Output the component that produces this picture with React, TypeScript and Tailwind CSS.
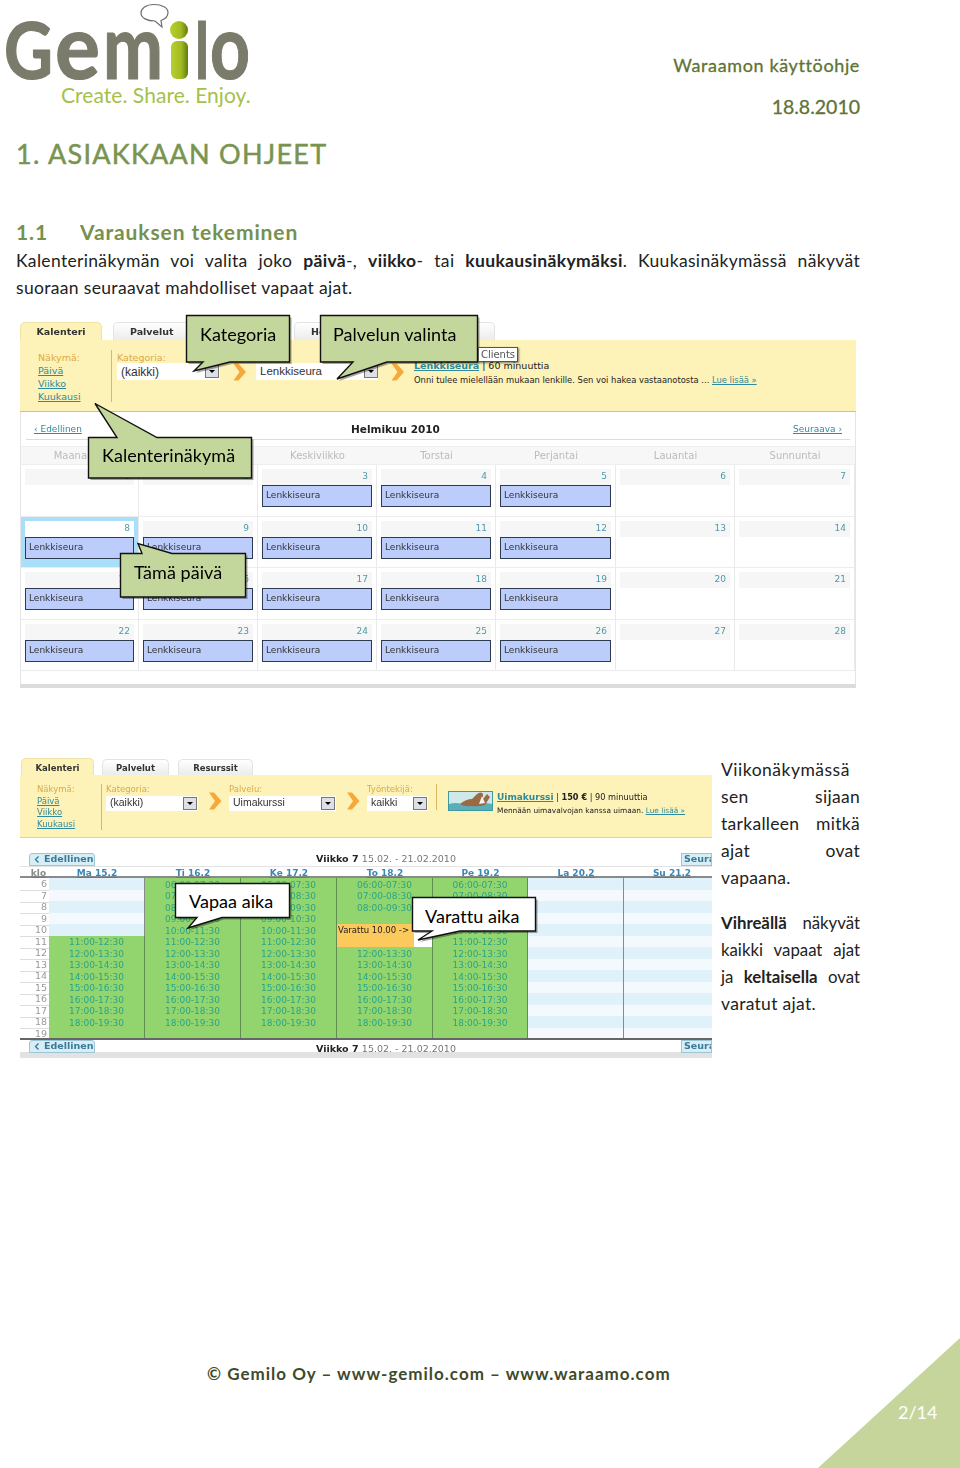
import React from "react";

const FONT_BODY = "font-['Lato','Noto_Sans',sans-serif]";
const FONT_UI = "font-['DejaVu_Sans',sans-serif]";

function Callout({
  className,
  w,
  h,
  d,
  fill,
  textClass,
  text,
}: {
  className: string;
  w: number;
  h: number;
  d: string;
  fill: string;
  textClass: string;
  text: string;
}) {
  return (
    <div className={`absolute ${className}`}>
      <svg width={w} height={h} className="block overflow-visible">
        <path d={d} transform="translate(2 2)" fill="#000" opacity="0.35" />
        <path d={d} fill={fill} stroke="#111" strokeWidth="1.4" />
      </svg>
      <span className={`absolute whitespace-nowrap text-[18px] leading-[24px] tracking-[0.05px] text-black ${FONT_BODY} ${textClass}`}>{text}</span>
    </div>
  );
}

function Chevron({ className }: { className: string }) {
  return (
    <svg viewBox="0 0 14 18" className={`shrink-0 ${className}`}>
      <path d="M1 0.5 L6 0.5 L13.500 9 L6 17.500 L1 17.500 L7 9 Z" fill="#f5a93a" />
    </svg>
  );
}

function Select({ className, text, textClass }: { className: string; text: string; textClass: string }) {
  return (
    <div className={`flex items-center justify-between bg-white font-['Liberation_Sans',sans-serif] text-[#333] ${className} ${textClass}`}>
      <span className="pl-[4px] whitespace-nowrap">{text}</span>
      <span className="flex h-[13px] w-[14px] items-center justify-center border border-[#777] bg-[#dfdfe6]">
        <span className="h-0 w-0 border-x-[3px] border-t-[3px] border-x-transparent border-t-black" />
      </span>
    </div>
  );
}

function ViewLinks({ small }: { small?: boolean }) {
  const cls = small ? "text-[8.5px] leading-[11.6px]" : "text-[9.5px] leading-[13px]";
  return (
    <div className={`flex flex-col ${FONT_UI} ${cls}`}>
      <span className="text-[#dca94a]">Näkymä:</span>
      <span className="text-[#2f8a9c] underline">Päivä</span>
      <span className="text-[#2f8a9c] underline">Viikko</span>
      <span className="text-[#2f8a9c] underline">Kuukausi</span>
    </div>
  );
}

function Tab({ className, label, active }: { className: string; label: string; active?: boolean }) {
  return (
    <div
      className={`flex items-center rounded-t-[5px] border border-b-0 pt-[2px] ${FONT_UI} font-bold text-[#333] ${
        active ? "border-[#efe3a8] bg-[#fdf2b7]" : "border-[#e3e3e3] bg-gradient-to-b from-white to-[#ececec]"
      } ${className}`}
    >
      {label}
    </div>
  );
}

const monthDays = [
  [1, 2, 3, 4, 5, 6, 7],
  [8, 9, 10, 11, 12, 13, 14],
  [15, 16, 17, 18, 19, 20, 21],
  [22, 23, 24, 25, 26, 27, 28],
];
const weekdays = ["Maanantai", "Tiistai", "Keskiviikko", "Torstai", "Perjantai", "Lauantai", "Sunnuntai"];
const monthCols = "grid-cols-[118px_119px_119px_119px_120px_119px_120px]";

function MonthView() {
  return (
    <div className={`ml-[20px] mt-[21px] w-[836px] blur-[0.4px] ${FONT_UI}`}>
      <div className="flex h-[18px] items-end">
        <Tab active className="h-[18px] w-[82px] justify-center text-[9.5px]" label="Kalenteri" />
        <Tab className="ml-[11px] h-[18px] w-[150px] pl-[16px] text-[9.5px]" label="Palvelut" />
        <Tab className="ml-[31px] h-[18px] w-[201px] pl-[16px] text-[9.5px]" label="Henkilöstö" />
      </div>
      <div className="relative flex h-[72px] border-b border-[#d9c469] bg-[#fdf2b7] pt-[11px]">
        <div className="ml-[18px] -mt-[1px] h-[52px] w-[74px] self-start border-r border-[#dcb75b] pt-[1px]">
          <ViewLinks />
        </div>
        <div className="ml-[5px] w-[104px]">
          <div className="text-[9.5px] leading-[13px] text-[#dca94a]">Kategoria:</div>
          <Select className="-mt-[1px] h-[17px] w-[103px] pr-[1px]" text="(kaikki)" textClass="text-[12px]" />
        </div>
        <Chevron className="ml-[11px] mt-[12px] h-[18px] w-[15px]" />
        <div className="ml-[9px] w-[123px] pt-[12px]">
          <Select className="h-[17px] w-[122px]" text="Lenkkiseura" textClass="text-[11.5px]" />
        </div>
        <Chevron className="ml-[11px] mt-[12px] h-[18px] w-[15px]" />
        <div className="ml-[9px] pt-[8px] text-[8.4px] leading-[14px] text-[#222]">
          <div className="text-[9.5px]">
            <span className="font-bold text-[#2f8a9c] underline">Lenkkiseura</span> | 60 minuuttia
          </div>
          <div className="whitespace-nowrap">
            Onni tulee mielellään mukaan lenkille. Sen voi hakea vastaanotosta ... <span className="text-[#2f8a9c] underline">Lue lisää »</span>
          </div>
        </div>
      </div>
      <div className="border-x border-[#e5e5e5]">
        <div className="mx-[5px] flex h-[28px] items-center border-b border-[#ddd] pl-[8px] pr-[8px] pt-[8px] text-[9px]">
          <span className="w-[317px] text-[#2f8a9c] underline">‹ Edellinen</span>
          <span className="text-[10.500px] font-bold text-[#222]">Helmikuu 2010</span>
          <span className="ml-auto text-[#2f8a9c] underline">Seuraava ›</span>
        </div>
        <div className={`mt-[6px] grid h-[19px] ${monthCols} items-center border-y border-[#eee] bg-[#f7f7f7] text-center text-[10px] text-[#bbb]`}>
          {weekdays.map((d) => (
            <span key={d}>{d}</span>
          ))}
        </div>
        {monthDays.map((row, r) => (
          <div key={r} className={`grid h-[51.5px] ${monthCols} border-b border-[#ececec]`}>
            {row.map((n, c) => {
              const today = n === 8;
              const hasEvent = c < 5 && n > 2;
              return (
                <div key={n} className={`border-r border-[#e9e9e9] pl-[4px] pr-[4px] pt-[4px] ${today ? "bg-[#a9dff8]" : ""}`}>
                  <div className={`h-[16px] pr-[4px] pt-[2px] text-right text-[9px] leading-[11px] text-[#4f9aa8] ${today ? "bg-white" : "bg-[#f6f6f6]"}`}>
                    {n}
                  </div>
                  {hasEvent && (
                    <div className="flex h-[22px] items-center border border-[#2e3a50] bg-[#bccdfb] pl-[3px] text-[9px] text-[#333]">
                      Lenkkiseura
                    </div>
                  )}
                </div>
              );
            })}
          </div>
        ))}
        <div className="h-[13px] bg-white" />
      </div>
      <div className="h-[4px] bg-[#dcdcdc]" />
    </div>
  );
}

const weekCols = "grid-cols-[29px_96px_96px_96px_96px_95px_96px_96px]";
const hours = [6, 7, 8, 9, 10, 11, 12, 13, 14, 15, 16, 17, 18, 19];
const two = (n: number) => String(n).padStart(2, "0");
const slot = (h: number) => `${two(h)}:00-${two(h + 1)}:30`;

function Green({ text }: { text?: string }) {
  return (
    <div className="flex items-center justify-center border-b border-r border-b-[#6faa58] border-r-[#5f8f50] bg-[#92d56f] pt-[2px] text-[9px] leading-none text-[#2ba483]">
      {text}
    </div>
  );
}

function Empty({ i }: { i: number }) {
  return <div className={`border-b border-r border-b-[#b7d2dc] border-r-[#8a8a8a] ${i % 2 === 0 ? "bg-[#dff1f9]" : "bg-[#f3f9fd]"}`} />;
}

function NavButton({ label, left }: { label: string; left?: boolean }) {
  return (
    <span className={`flex h-[13px] items-center border border-[#9cc6d6] bg-[#d7eef6] text-[9.5px] font-bold text-[#3b7a97] ${left ? "w-[66px] rounded-t-[3px] pl-[4px]" : "w-[31px] overflow-hidden pl-[2px]"}`}>
      {left && (
        <svg viewBox="0 0 8 10" className="mr-[4px] h-[9px] w-[6px] shrink-0">
          <path d="M6 1 L2 5 L6 9" fill="none" stroke="#3b7a97" strokeWidth="1.8" />
        </svg>
      )}
      {label}
    </span>
  );
}

function WeekNav() {
  return (
    <>
      <NavButton left label="Edellinen" />
      <span className="ml-[221px] mt-[2px] whitespace-nowrap text-[9.5px] font-bold text-[#222]">
        Viikko 7 <span className="text-[9.500px] font-normal text-[#777]">15.02. - 21.02.2010</span>
      </span>
      <span className="ml-auto">
        <NavButton label="Seura" />
      </span>
    </>
  );
}

function WeekView() {
  const days = ["Ma 15.2", "Ti 16.2", "Ke 17.2", "To 18.2", "Pe 19.2", "La 20.2", "Su 21.2"];
  return (
    <div className={`ml-[20px] mt-[3px] w-[692px] shrink-0 overflow-hidden blur-[0.4px] ${FONT_UI}`}>
      <div className="flex h-[17px] items-end">
        <Tab active className="ml-[1px] h-[17px] w-[73px] justify-center text-[8.5px]" label="Kalenteri" />
        <Tab className="ml-[8px] h-[16px] w-[67px] justify-center text-[8.5px]" label="Palvelut" />
        <Tab className="ml-[9px] h-[16px] w-[75px] justify-center text-[8.5px]" label="Resurssit" />
      </div>
      <div className="flex h-[63px] border-b border-[#e3d68f] bg-[#fdf3b8] pt-[9px] text-[8.5px] leading-[11.6px]">
        <div className="ml-[17px] h-[46px] w-[65px] border-r border-[#dcb75b]">
          <ViewLinks small />
        </div>
        <div className="ml-[4px] w-[92px]">
          <div className="text-[#dca94a]">Kategoria:</div>
          <Select className="h-[15px] w-[92px] pr-[1px]" text="(kaikki)" textClass="text-[10.5px]" />
        </div>
        <Chevron className="ml-[10px] mt-[8px] h-[18px] w-[14px]" />
        <div className="ml-[7px] w-[107px]">
          <div className="text-[#dca94a]">Palvelu:</div>
          <Select className="h-[15px] w-[107px] pr-[1px]" text="Uimakurssi" textClass="text-[10.5px]" />
        </div>
        <Chevron className="ml-[10px] mt-[8px] h-[18px] w-[14px]" />
        <div className="ml-[7px] w-[61px]">
          <div className="text-[#dca94a]">Työntekijä:</div>
          <Select className="h-[15px] w-[61px] pr-[1px]" text="kaikki" textClass="text-[10.5px]" />
        </div>
        <div className="ml-[8px] h-[26px] border-r border-[#dcb75b]" />
        <svg viewBox="0 0 45 20" className="ml-[11px] mt-[7px] h-[20px] w-[45px] shrink-0">
          <rect x="0.5" y="0.5" width="44" height="19" fill="#cfe9ea" stroke="#3f9a9c" />
          <path d="M1 13 Q8 11 14 13 T28 13 T44 13 V19 H1 Z" fill="#58aebb" />
          <path d="M12 13 Q18 8 24 8 L29 3 Q33 0 35 3 L35 8 L39 3 L42 6 L37 14 Q30 16 24 15 Q16 16 12 13 Z" fill="#9a6a44" />
          <path d="M31 13 L34 5 L37 12 Z" fill="#f4f4f0" />
        </svg>
        <div className="ml-[4px] pt-[7px] text-[8px] leading-[13px] text-[#222]">
          <div className="whitespace-nowrap text-[8.2px]">
            <span className="text-[9px] font-bold text-[#2f8a9c] underline">Uimakurssi</span> | <span className="font-bold">150 €</span> | 90 minuuttia
          </div>
          <div className="whitespace-nowrap text-[7.4px]">
            Mennään uimavalvojan kanssa uimaan. <span className="text-[#2f8a9c] underline">Lue lisää »</span>
          </div>
        </div>
      </div>
      <div className="mt-[13px] flex h-[15px] items-end pl-[9px]">
        <WeekNav />
      </div>
      <div className={`grid h-[12px] ${weekCols} border-b-2 border-t border-b-[#8a8a8a] border-t-[#e3e3e3] pt-[1px] text-center text-[9px] font-bold leading-[10px] text-[#3b86b8] underline`}>
        <span className="pl-[8px] text-[#8a8a8a]">klo</span>
        {days.map((d) => (
          <span key={d}>{d}</span>
        ))}
      </div>
      <div className="h-[162px] overflow-hidden border-b-2 border-[#666]">
        {hours.map((h) => (
          <div key={h} className={`grid h-[11.5px] ${weekCols}`}>
            <div className="border-b border-[#ddd] pr-[2px] text-right text-[9.5px] leading-[12px] text-[#999]">{h}</div>
            {h < 11 ? <Empty i={h - 6} /> : <Green text={h < 19 ? slot(h) : undefined} />}
            <Green text={h < 19 ? slot(h) : undefined} />
            <Green text={h < 19 ? slot(h) : undefined} />
            {h === 10 || h === 11 ? (
              <div className="flex border-r border-[#5f8f50] bg-white">
                <div className="w-[77px] overflow-hidden whitespace-nowrap bg-[#fcc95d] pl-[1px] text-[8.5px] leading-[12px] text-[#222]">
                  {h === 10 ? "Varattu 10.00 ->" : ""}
                </div>
              </div>
            ) : (
              <Green text={h < 19 && h !== 9 ? slot(h) : undefined} />
            )}
            <Green text={h < 19 ? slot(h) : undefined} />
            <Empty i={h - 6} />
            <Empty i={h - 6} />
          </div>
        ))}
      </div>
      <div className="flex h-[12px] items-start bg-white pl-[9px]">
        <WeekNav />
      </div>
      <div className="h-[6px] bg-[#e2e2e2]" />
    </div>
  );
}

function Logo() {
  return (
    <div className="relative h-[112px] w-[260px]">
      <svg width="260" height="112" viewBox="0 0 260 112" className="block">
        <g fill="#7b7b6b" stroke="#7b7b6b" strokeWidth="1.2" strokeLinejoin="round" fontFamily="'Lato', sans-serif" fontWeight="700">
          <text x="4" y="79" fontSize="79" textLength="49" lengthAdjust="spacingAndGlyphs">G</text>
          <text x="55" y="79" fontSize="90" textLength="45" lengthAdjust="spacingAndGlyphs">e</text>
          <text x="103" y="79" fontSize="90" textLength="60" lengthAdjust="spacingAndGlyphs">m</text>
          <text x="195" y="79" fontSize="78" textLength="14" lengthAdjust="spacingAndGlyphs">l</text>
          <text x="210" y="79" fontSize="90" textLength="40" lengthAdjust="spacingAndGlyphs">o</text>
        </g>
        <defs>
          <linearGradient id="gi" x1="0" x2="1" y1="0" y2="0">
            <stop offset="0" stopColor="#b9cf2f" />
            <stop offset="0.6" stopColor="#a2bb22" />
            <stop offset="1" stopColor="#5f7a12" />
          </linearGradient>
        </defs>
        <circle cx="179" cy="30" r="9" fill="url(#gi)" />
        <rect x="171" y="41" width="17" height="38" rx="6" fill="url(#gi)" />
        <path
          d="M154 4.5 C146 4.5 141 8.500 141 13 C141 18 147 21 155 21 L162 27 L161 20.500 C165 19 168 16 168 12.500 C168 8 162 4.5 154 4.5 Z"
          fill="#fff"
          stroke="#6d6d6d"
          strokeWidth="1.2"
        />
      </svg>
      <span className={`absolute left-[61px] top-[83px] whitespace-nowrap text-[21px] leading-[24px] tracking-[0.05px] text-[#a5c14a] ${FONT_BODY}`}>
        Create. Share. Enjoy.
      </span>
    </div>
  );
}

export default function App() {
  const jline = "whitespace-nowrap [text-align:justify] [text-align-last:justify]";
  return (
    <div className={`relative h-[1468px] w-[960px] overflow-hidden bg-white ${FONT_BODY} text-[#222]`}>
      <header className="flex h-[134px] items-start justify-between pr-[100px]">
        <Logo />
        <div className="pt-[53px] text-right leading-[24px] text-[#5f7334] [-webkit-text-stroke:0.3px_#5f7334]">
          <div className="text-[18px] tracking-[0.63px]">Waraamon käyttöohje</div>
          <div className="mt-[18px] text-[19.500px]">18.8.2010</div>
        </div>
      </header>

      <h1 className="flex h-[40px] items-center pl-[16px] text-[27px] tracking-[1.25px] text-[#7a9450] [-webkit-text-stroke:0.5px_#7a9450]">
        <span className="w-[32px]">1.</span>
        <span>ASIAKKAAN OHJEET</span>
      </h1>

      <h2 className="mt-[44px] flex h-[28px] items-center pl-[16px] text-[21px] font-bold leading-[28px] tracking-[0.9px] text-[#76904d]">
        <span className="w-[64px]">1.1</span>
        <span>Varauksen tekeminen</span>
      </h2>

      <div className="ml-[16px] mt-[1px] w-[844px] text-[17.500px] leading-[27px] tracking-[0.33px]">
        <p className={jline}>
          Kalenterinäkymän voi valita joko <b>päivä</b>-, <b>viikko</b>- tai <b>kuukausinäkymäksi</b>. Kuukasinäkymässä näkyvät
        </p>
        <p>suoraan seuraavat mahdolliset vapaat ajat.</p>
      </div>

      <MonthView />

      <div className="mt-[67px] flex items-start">
        <WeekView />
        <div className="ml-[9px] mt-[1px] w-[139px] text-[17.500px] leading-[27px] tracking-[0.3px]">
          <p className="whitespace-nowrap tracking-[0.5px]">Viikonäkymässä</p>
          <p className={jline}>sen sijaan</p>
          <p className={jline}>tarkalleen mitkä</p>
          <p className={jline}>ajat ovat</p>
          <p>vapaana.</p>
          <p className={`mt-[18px] text-[16.800px] tracking-[0px] ${jline}`}>
            <b>Vihreällä</b> näkyvät
          </p>
          <p className={`text-[16.800px] tracking-[0px] ${jline}`}>kaikki vapaat ajat</p>
          <p className={`text-[16.800px] tracking-[0px] ${jline}`}>
            ja <b>keltaisella</b> ovat
          </p>
          <p>varatut ajat.</p>
        </div>
      </div>

      <footer className="mt-[302px] h-[28px] pl-[207px] text-[17px] font-bold leading-[28px] tracking-[1px] text-[#3f4a28]">
        © Gemilo Oy – www-gemilo.com – www.waraamo.com
      </footer>

      <div className="absolute bottom-0 right-0 h-[130px] w-[142px] bg-[#c5d59b] [clip-path:polygon(100%_0,100%_100%,0_100%)]">
        <span className="absolute left-[80px] top-[62px] text-[18px] leading-[24px] text-white">2/14</span>
      </div>

      <Callout
        className="left-[186px] top-[315px]"
        w={104}
        h={57}
        d="M0.500 0.500 H103.500 V47 H44 L8 56 L17 47 H0.500 Z"
        fill="#c3d69b"
        textClass="left-[14px] top-[7px]"
        text="Kategoria"
      />
      <Callout
        className="left-[320px] top-[315px]"
        w={158}
        h={65}
        d="M0.500 0.500 H157.500 V47 H67 L17 64 L33 47 H0.500 Z"
        fill="#c3d69b"
        textClass="left-[13px] top-[7px]"
        text="Palvelun valinta"
      />
      <Callout
        className="left-[88px] top-[403px]"
        w={164}
        h={75}
        d="M0.500 34.500 H29 L7 0.500 L69 34.500 H163.500 V75 H0.500 Z"
        fill="#c3d69b"
        textClass="left-[14px] top-[40px]"
        text="Kalenterinäkymä"
      />
      <Callout
        className="left-[120px] top-[543px]"
        w={126}
        h={54}
        d="M0.500 10.500 H22 L18 0.500 L52 10.500 H125.500 V54 H0.500 Z"
        fill="#c3d69b"
        textClass="left-[14px] top-[17px]"
        text="Tämä päivä"
      />
      <Callout
        className="left-[175px] top-[883px]"
        w={115}
        h={45}
        d="M0.500 0.500 H114.500 V34.500 H47 L13 45 L22 34.500 H0.500 Z"
        fill="#ffffff"
        textClass="left-[14px] top-[6px]"
        text="Vapaa aika"
      />
      <Callout
        className="left-[412px] top-[897px]"
        w={124}
        h={43}
        d="M0.500 0.500 H123.500 V34 H48 L6 43 L20 34 H0.500 Z"
        fill="#ffffff"
        textClass="left-[13px] top-[7px]"
        text="Varattu aika"
      />
      <div className={`absolute left-[478px] top-[347px] flex h-[15px] w-[40px] items-center justify-center border border-[#555] bg-white text-[10px] text-[#555] shadow-[1px_1px_2px_rgba(0,0,0,0.5)] ${FONT_UI}`}>
        Clients
      </div>
    </div>
  );
}
